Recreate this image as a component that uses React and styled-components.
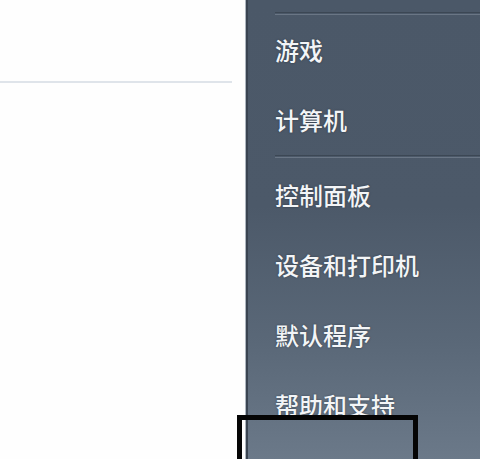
import React from "react";
import styled, { createGlobalStyle } from "styled-components";

const GlobalStyle = createGlobalStyle`
  html, body {
    margin: 0;
    padding: 0;
    background: #fdfdfd;
  }
  #root {
    width: 480px;
    height: 459px;
    overflow: hidden;
  }
`;

const Menu = styled.div`
  position: relative;
  display: flex;
  width: 480px;
  height: 459px;
  overflow: hidden;
  font-family: "Noto Sans CJK SC", "Noto Sans", sans-serif;
`;

const ProgramsPane = styled.div`
  width: 245px;
  flex-shrink: 0;
  background: #fefefe;
  padding-top: 81px;
  box-sizing: border-box;
`;

const PaneRule = styled.div`
  width: 232px;
  height: 2px;
  background: #dfe4ea;
`;

const PlacesPane = styled.div`
  flex: 1;
  display: flex;
  flex-direction: column;
  padding-top: 12px;
  border-left: 1px solid #aeb6bf;
  box-shadow: inset 2px 0 0 #3a4451;
  background: linear-gradient(180deg, #4b5868 0%, #4c5969 45%, #5a6878 75%, #6b7989 100%);
`;

const Divider = styled.div`
  margin-left: 29px;
  height: 1px;
  border-top: 1px solid #3c4754;
  border-bottom: 1px solid #6a7685;
  margin-bottom: ${(p) => p.$gap || 0}px;
`;

const Item = styled.div`
  height: ${(p) => p.$h || 70}px;
  flex-shrink: 0;
  display: flex;
  align-items: center;
  padding-left: 29px;
  font-size: 24px;
  font-weight: 500;
  color: #f3f5f7;
  text-shadow: 0 0 2px rgba(20, 28, 38, 0.6);
  white-space: nowrap;
`;

const HighlightBox = styled.div`
  position: absolute;
  left: 237px;
  top: 415px;
  width: 171px;
  height: 60px;
  border: 5px solid #050505;
`;

const items = [
  { label: "游戏", h: 69 },
  { label: "计算机", h: 71, divider: true },
  { label: "控制面板" },
  { label: "设备和打印机" },
  { label: "默认程序" },
  { label: "帮助和支持" }
];

export default function App() {
  return (
    <>
      <GlobalStyle />
      <Menu>
        <ProgramsPane>
          <PaneRule />
        </ProgramsPane>
        <PlacesPane>
          <Divider />
          {items.map((it) => (
            <React.Fragment key={it.label}>
              <Item $h={it.h}>{it.label}</Item>
              {it.divider && <Divider $gap={1} />}
            </React.Fragment>
          ))}
        </PlacesPane>
        <HighlightBox />
      </Menu>
    </>
  );
}
